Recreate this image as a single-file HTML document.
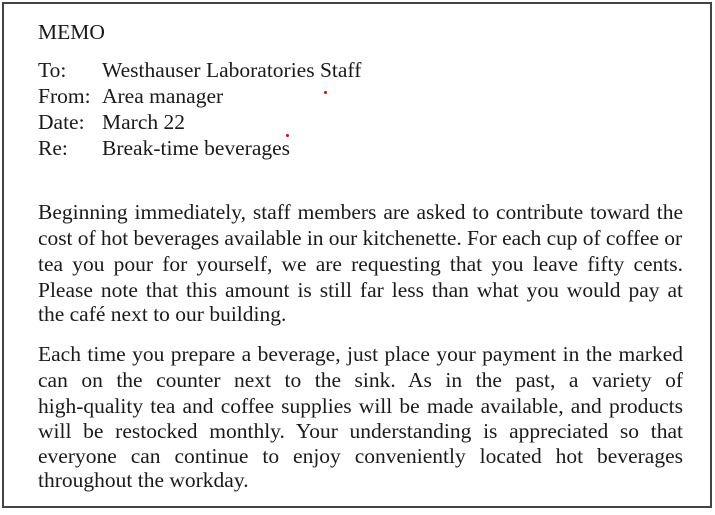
<!DOCTYPE html>
<html><head><meta charset="utf-8"><style>
html,body{margin:0;padding:0;background:#fff;}
body{width:715px;height:515px;position:relative;overflow:hidden;font-family:"Liberation Serif",serif;color:#1a1a1a;font-size:21.5px;}
.box{position:absolute;left:2px;top:2px;width:706px;height:502px;border:2px solid #444;}
.l{position:absolute;left:38px;width:645px;white-space:nowrap;line-height:26px;}
.j{text-align:justify;text-align-last:justify;white-space:normal;}
.v{position:absolute;left:102px;line-height:26px;white-space:nowrap;}
.dot{position:absolute;width:3px;height:3px;border-radius:50%;background:#e00;}
</style></head><body>
<div class="box"></div>
<div class="l" style="top:19px">MEMO</div>
<div class="l" style="top:57px">To:</div><div class="v" style="top:57px">Westhauser Laboratories Staff</div>
<div class="l" style="top:83px">From:</div><div class="v" style="top:83px">Area manager</div>
<div class="l" style="top:109px">Date:</div><div class="v" style="top:109px">March 22</div>
<div class="l" style="top:135px">Re:</div><div class="v" style="top:135px">Break-time beverages</div>
<div class="dot" style="left:324px;top:91px"></div>
<div class="dot" style="left:286px;top:134px"></div>
<div class="l j" style="top:199px">Beginning immediately, staff members are asked to contribute toward the</div>
<div class="l" style="top:225px;letter-spacing:-0.05px">cost of hot beverages available in our kitchenette. For each cup of coffee or</div>
<div class="l j" style="top:251px">tea you pour for yourself, we are requesting that you leave fifty cents.</div>
<div class="l j" style="top:277px">Please note that this amount is still far less than what you would pay at</div>
<div class="l" style="top:301px">the café next to our building.</div>
<div class="l j" style="top:341px">Each time you prepare a beverage, just place your payment in the marked</div>
<div class="l j" style="top:367px">can on the counter next to the sink. As in the past, a variety of</div>
<div class="l j" style="top:393px">high-quality tea and coffee supplies will be made available, and products</div>
<div class="l j" style="top:418px">will be restocked monthly. Your understanding is appreciated so that</div>
<div class="l j" style="top:443px">everyone can continue to enjoy conveniently located hot beverages</div>
<div class="l" style="top:467px">throughout the workday.</div>
</body></html>
